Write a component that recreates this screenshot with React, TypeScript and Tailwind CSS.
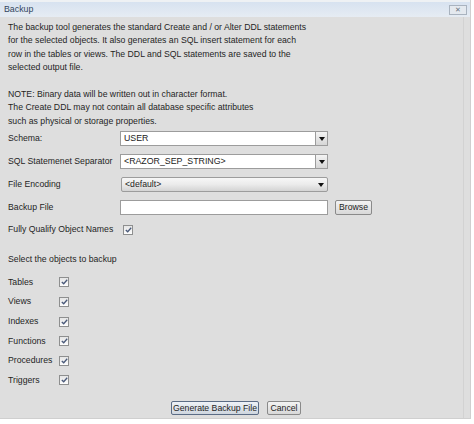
import React from 'react';

const font = { fontFamily: '"Liberation Sans", Arial, sans-serif' };

function Check() {
  return (
    <span className="flex h-[10px] w-[10px] items-center justify-center border border-[#8e8f8f] bg-gradient-to-b from-[#e6e6e6] to-[#fdfdfd]">
      <svg width="7" height="6" viewBox="0 0 7 6">
        <path d="M0.8 3 L2.7 4.8 L6.2 0.8" fill="none" stroke="#4a5a7a" strokeWidth="1.3" />
      </svg>
    </span>
  );
}

function Arrow() {
  return (
    <svg width="6" height="4" viewBox="0 0 6 4">
      <path d="M0 0 H6 L3 4 Z" fill="#111" />
    </svg>
  );
}

function Combo({ value }: { value: string }) {
  return (
    <div className="flex h-[15px] w-[208px]">
      <div className="flex flex-1 items-center border border-[#9c9c9c] bg-white pl-[3px] text-[8.8px] text-[#222]">{value}</div>
      <div className="ml-[-1px] flex w-[13px] items-center justify-center border border-[#9c9c9c] bg-gradient-to-b from-[#f4f4f4] to-[#d6d6d6]">
        <Arrow />
      </div>
    </div>
  );
}

const objects = ['Tables', 'Views', 'Indexes', 'Functions', 'Procedures', 'Triggers'];

export default function App() {
  return (
    <div className="h-[424px] w-[474px] bg-white text-[#1e1e1e]" style={font}>
      <div className="flex h-[419px] w-[471px] flex-col border-r border-b border-[#cfcfcf] bg-[#dedede]">
        {/* title bar */}
        <div className="flex h-[17px] items-center justify-between border-t-2 border-[#eef1f4] bg-gradient-to-b from-[#d7e2f0] to-[#e6ecf3] pl-[4px] pr-[3px]">
          <span className="text-[8.8px] text-[#34465e]">Backup</span>
          <span className="flex h-[10px] w-[18px] items-center justify-center border border-[#a9b3bf] bg-[#e4e9ef] text-[7px] leading-none text-[#6a7480]">✕</span>
        </div>

        <div className="mr-[6px] flex flex-1 flex-col border-r border-[#d2d2d2] pl-[8px] pt-[4px] text-[8.7px]">
          <p className="leading-[13.4px]">
            The backup tool generates the standard Create and / or Alter DDL statements
            <br />
            for the selected objects. It also generates an SQL insert statement for each
            <br />
            row in the tables or views. The DDL and SQL statements are saved to the
            <br />
            selected output file.
            <br />
            <br />
            NOTE: Binary data will be written out in character format.
            <br />
            The Create DDL may not contain all database specific attributes
            <br />
            such as physical or storage properties.
          </p>

          <div className="mt-[3px] flex flex-col gap-[8px]">
            <div className="flex items-center">
              <span className="w-[112px]">Schema:</span>
              <Combo value="USER" />
            </div>
            <div className="flex items-center">
              <span className="w-[112px]">SQL Statemenet Separator</span>
              <Combo value="<RAZOR_SEP_STRING>" />
            </div>
            <div className="flex items-center">
              <span className="w-[113px]">File Encoding</span>
              <div className="flex h-[15px] w-[207px] items-center justify-between rounded-[2px] border border-[#9c9c9c] bg-gradient-to-b from-[#f7f7f7] via-[#ebebeb] to-[#d4d4d4] pl-[3px] pr-[3px]">
                <span>&lt;default&gt;</span>
                <Arrow />
              </div>
            </div>
            <div className="flex items-center">
              <span className="w-[112px]">Backup File</span>
              <div className="h-[15px] w-[208px] border border-[#9c9c9c] bg-white" />
              <button className="ml-[7px] h-[15px] w-[37px] rounded-[2px] border border-[#8a8a8a] bg-gradient-to-b from-[#f3f3f3] to-[#d8d8d8] text-[8.7px] leading-none">Browse</button>
            </div>
          </div>

          <div className="mt-[8px] flex items-center">
            <span className="w-[115px]">Fully Qualify Object Names</span>
            <Check />
          </div>

          <div className="mt-[17px]">Select the objects to backup</div>

          <div className="mt-[11px] flex flex-col gap-[9.6px]">
            {objects.map((o) => (
              <div key={o} className="flex h-[10px] items-center">
                <span className="w-[51px]">{o}</span>
                <Check />
              </div>
            ))}
          </div>

          <div className="mt-[16px] flex gap-[8px] pl-[163px]">
            <button className="h-[14px] w-[88px] whitespace-nowrap rounded-[2px] border border-[#5b6c85] bg-gradient-to-b from-[#eef2f7] to-[#cfd6df] text-[8.7px] leading-none">Generate Backup File</button>
            <button className="h-[14px] w-[34px] whitespace-nowrap rounded-[2px] border border-[#8a8a8a] bg-gradient-to-b from-[#f3f3f3] to-[#d8d8d8] text-[8.7px] leading-none">Cancel</button>
          </div>
        </div>
      </div>
    </div>
  );
}
